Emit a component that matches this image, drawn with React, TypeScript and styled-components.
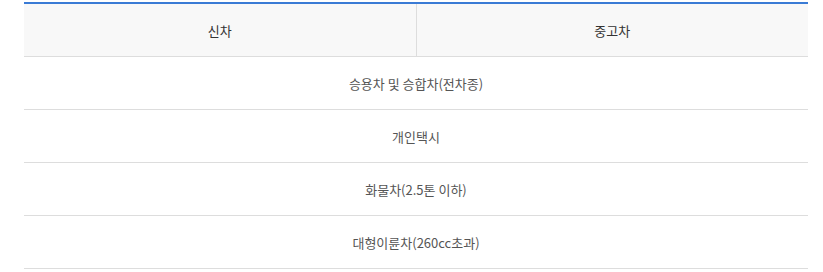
import React from "react";
import styled, { createGlobalStyle } from "styled-components";

const Global = createGlobalStyle`
  html, body { margin: 0; padding: 0; background: #fff; }
  body { font-family: "Noto Sans CJK KR", "Noto Sans", sans-serif; }
`;

const Wrap = styled.div`
  padding: 2px 15px 0 24px;
`;

const Table = styled.table`
  width: 784px;
  border-collapse: collapse;
  border-top: 2px solid #3a7bd5;
  table-layout: fixed;
`;

const Th = styled.th<{ $divider?: boolean }>`
  height: 52px;
  padding: 0;
  background: #f8f8f8;
  color: #333;
  font-size: 13px;
  font-weight: 400;
  text-align: center;
  border-bottom: 1px solid #ddd;
  border-right: ${(p) => (p.$divider ? "1px solid #ddd" : "none")};
`;

const Td = styled.td`
  height: 52px;
  padding: 0;
  color: #555;
  font-size: 13px;
  text-align: center;
  border-bottom: 1px solid #ddd;
`;

const rows = [
  "승용차 및 승합차(전차종)",
  "개인택시",
  "화물차(2.5톤 이하)",
  "대형이륜차(260cc초과)",
];

export default function App() {
  return (
    <>
      <Global />
      <Wrap>
        <Table>
          <thead>
            <tr>
              <Th $divider>신차</Th>
              <Th>중고차</Th>
            </tr>
          </thead>
          <tbody>
            {rows.map((r) => (
              <tr key={r}>
                <Td colSpan={2}>{r}</Td>
              </tr>
            ))}
          </tbody>
        </Table>
      </Wrap>
    </>
  );
}
